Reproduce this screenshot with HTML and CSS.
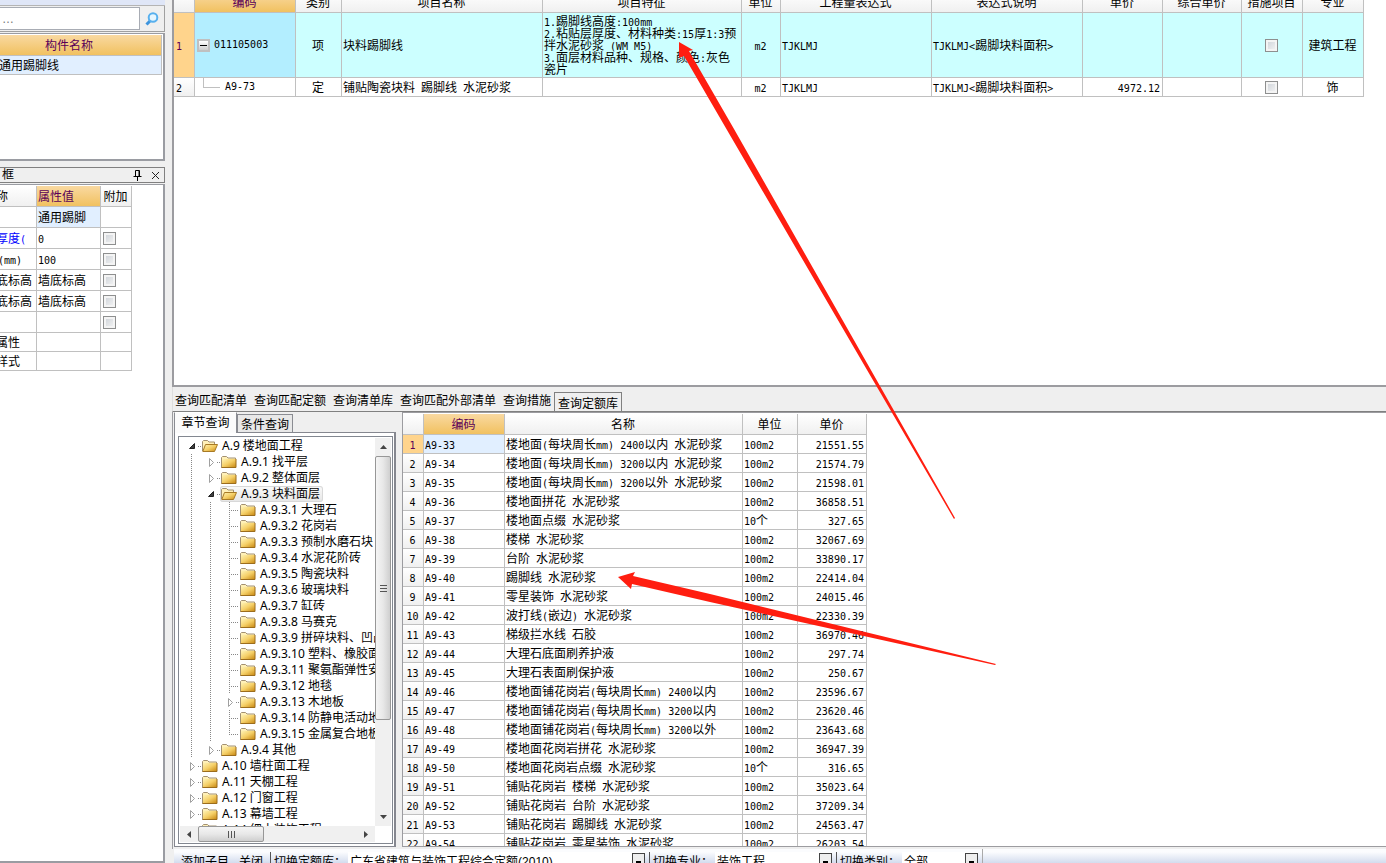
FILE: index.html
```html
<!DOCTYPE html>
<html lang="zh-CN">
<head>
<meta charset="utf-8">
<title>查询定额库</title>
<link rel="stylesheet" href="styles.css">
</head>
<body>
<svg class="defs" width="0" height="0" aria-hidden="true">
  <defs>
    <linearGradient id="gold" x1="0" y1="0" x2="1" y2="1"><stop offset="0" stop-color="#fff3b4"/><stop offset=".5" stop-color="#f5cf67"/><stop offset="1" stop-color="#c98a14"/></linearGradient>
    <symbol id="folder" viewBox="0 0 16 12"><path d="M.5 11.5V1.500L1.500 .5H5.500L7 2H14.500V11Z" fill="#fff0b8" stroke="#a39172"/><rect x="1" y="3" width="14" height="8" fill="url(#gold)"/><path d="M.5 11.500H15V3" fill="none" stroke="#9c6d1c"/></symbol>
    <symbol id="open" viewBox="0 0 16 12"><path d="M.5 11V1.500L1.500 .5H5.500L7 2H12.500V5" fill="#fff0b8" stroke="#a39172"/><path d="M3.500 4.500H15.500L12.500 11.500H.8Z" fill="url(#gold)" stroke="#a87a25"/></symbol>
    <symbol id="shut" viewBox="0 0 19 16"><path d="M8.500 4.500L12.500 8.500L8.500 12.500Z" fill="#fff" stroke="#a0a0a0"/><path d="M16 8.500H19" stroke="#888" stroke-dasharray="1 1"/></symbol>
    <symbol id="down" viewBox="0 0 19 16"><path d="M12.500 5.500V10.500H7.500Z" fill="#404040" stroke="#222"/><path d="M16 8.500H19" stroke="#888" stroke-dasharray="1 1"/></symbol>
  </defs>
</svg>
<div class="app">
  <aside class="side">
    <div class="strip"></div>
    <form class="search">
      <input type="text" aria-label="搜索构件" value="…">
      <button type="button" aria-label="搜索"><svg width="14" height="14" viewBox="0 0 14 14"><path d="M1.500 12.500L5 9" stroke="#3d94dd" stroke-width="3"/><circle cx="8" cy="5.500" r="4.300" fill="#e6f6ff" stroke="#58b0ee" stroke-width="2"/></svg></button>
    </form>
    <div class="panel names">
      <table><thead><tr><th class="hot">构件名称</th></tr></thead><tbody><tr><td class="pick">通用踢脚线</td></tr></tbody></table>
    </div>
    <div class="titlebar"><h2>框</h2>
      <button type="button" aria-label="固定"><svg width="9" height="11" viewBox="0 0 9 11"><path d="M2.500 6V.500H6.500V6M6 1V6M.500 6.500H8.500M4.500 7V11" fill="none" stroke="#000"/></svg></button>
      <button type="button" aria-label="关闭"><svg width="9" height="9" viewBox="0 0 9 9"><path d="M1 1L8 8M8 1L1 8" stroke="#222"/></svg></button>
    </div>
    <div class="panel props">
      <table>
        <colgroup><col class="p1"><col class="p2"><col class="p3"></colgroup>
        <thead><tr><th class="cut">称</th><th class="hot left">属性值</th><th>附加</th></tr></thead>
        <tbody>
          <tr><td></td><td class="pick">通用踢脚</td><td></td></tr>
          <tr><td class="cut blue">厚度<i>(</i></td><td><i>0</i></td><td><input type="checkbox" aria-label="附加 厚度"></td></tr>
          <tr><td class="cut unit"><i>(mm)</i></td><td><i>100</i></td><td><input type="checkbox" aria-label="附加 高度"></td></tr>
          <tr><td class="cut">底标高</td><td>墙底标高</td><td><input type="checkbox" aria-label="附加 起点底标高"></td></tr>
          <tr><td class="cut">底标高</td><td>墙底标高</td><td><input type="checkbox" aria-label="附加 终点底标高"></td></tr>
          <tr><td></td><td></td><td><input type="checkbox" aria-label="附加 备注"></td></tr>
          <tr class="low"><td class="cut">属性</td><td></td><td></td></tr>
          <tr class="low"><td class="cut">样式</td><td></td><td></td></tr>
        </tbody>
      </table>
    </div>
  </aside>

  <main class="main">
    <section class="upper">
      <table class="bill">
        <colgroup><col class="b1"><col class="b2"><col class="b3"><col class="b4"><col class="b5"><col class="b6"><col class="b7"><col class="b7"><col class="b8"><col class="b9"><col class="b10"><col class="b10"></colgroup>
        <thead><tr><th></th><th class="hot">编码</th><th>类别</th><th>项目名称</th><th>项目特征</th><th>单位</th><th>工程量表达式</th><th>表达式说明</th><th>单价</th><th>综合单价</th><th>措施项目</th><th>专业</th></tr></thead>
        <tbody>
          <tr class="current">
            <th class="now"><i>1</i></th>
            <td class="code"><div class="node"><button type="button" class="fold" aria-label="折叠"></button><i>011105003</i></div></td>
            <td class="mid">项</td><td>块料踢脚线</td>
            <td class="feature"><i>1.</i>踢脚线高度<i>:100mm</i><br><i>2.</i>粘贴层厚度、材料种类<i>:15</i>厚<i>1:3</i>预<br>拌水泥砂浆<i> (WM M5)</i><br><i>3.</i>面层材料品种、规格、颜色<i>:</i>灰色<br>瓷片</td>
            <td class="mid"><i>m2</i></td><td><i>TJKLMJ</i></td><td><i>TJKLMJ&lt;</i>踢脚块料面积<i>&gt;</i></td><td></td><td></td>
            <td class="mid"><input type="checkbox" aria-label="措施项目 1"></td><td class="mid">建筑工程</td>
          </tr>
          <tr class="child">
            <th><i>2</i></th><td><div class="node leaf"><span class="elbow"></span><i>A9-73</i></div></td>
            <td class="mid">定</td><td>铺贴陶瓷块料<i> </i>踢脚线<i> </i>水泥砂浆</td><td></td>
            <td class="mid"><i>m2</i></td><td><i>TJKLMJ</i></td><td><i>TJKLMJ&lt;</i>踢脚块料面积<i>&gt;</i></td><td class="num"><i>4972.12</i></td><td></td>
            <td class="mid"><input type="checkbox" aria-label="措施项目 2"></td><td class="mid">饰</td>
          </tr>
        </tbody>
      </table>
    </section>

    <nav class="tabs">
      <button type="button">查询匹配清单</button><button type="button">查询匹配定额</button><button type="button">查询清单库</button><button type="button">查询匹配外部清单</button><button type="button">查询措施</button><button type="button" class="on">查询定额库</button>
    </nav>

    <section class="lower">
      <div class="chapters">
        <div class="subtabs"><button type="button" class="on">章节查询</button><button type="button">条件查询</button></div>
        <div class="page">
          <div class="treebox">
            <ul class="tree">
              <li><svg class="c"><use href="#down"/></svg><svg class="f"><use href="#open"/></svg>A.9 楼地面工程</li>
              <li><b></b><svg class="c"><use href="#shut"/></svg><svg class="f"><use href="#folder"/></svg>A.9.1 找平层</li>
              <li><b></b><svg class="c"><use href="#shut"/></svg><svg class="f"><use href="#folder"/></svg>A.9.2 整体面层</li>
              <li><b></b><svg class="c"><use href="#down"/></svg><span class="sel"><svg class="f"><use href="#open"/></svg>A.9.3 块料面层</span></li>
              <li><b></b><b></b><b class="t"></b><svg class="f"><use href="#folder"/></svg>A.9.3.1 大理石</li>
              <li><b></b><b></b><b class="t"></b><svg class="f"><use href="#folder"/></svg>A.9.3.2 花岗岩</li>
              <li><b></b><b></b><b class="t"></b><svg class="f"><use href="#folder"/></svg>A.9.3.3 预制水磨石块</li>
              <li><b></b><b></b><b class="t"></b><svg class="f"><use href="#folder"/></svg>A.9.3.4 水泥花阶砖</li>
              <li><b></b><b></b><b class="t"></b><svg class="f"><use href="#folder"/></svg>A.9.3.5 陶瓷块料</li>
              <li><b></b><b></b><b class="t"></b><svg class="f"><use href="#folder"/></svg>A.9.3.6 玻璃块料</li>
              <li><b></b><b></b><b class="t"></b><svg class="f"><use href="#folder"/></svg>A.9.3.7 缸砖</li>
              <li><b></b><b></b><b class="t"></b><svg class="f"><use href="#folder"/></svg>A.9.3.8 马赛克</li>
              <li><b></b><b></b><b class="t"></b><svg class="f"><use href="#folder"/></svg>A.9.3.9 拼碎块料、凹凸</li>
              <li><b></b><b></b><b class="t"></b><svg class="f"><use href="#folder"/></svg>A.9.3.10 塑料、橡胶面</li>
              <li><b></b><b></b><b class="t"></b><svg class="f"><use href="#folder"/></svg>A.9.3.11 聚氨酯弹性安</li>
              <li><b></b><b></b><b class="t"></b><svg class="f"><use href="#folder"/></svg>A.9.3.12 地毯</li>
              <li><b></b><b></b><svg class="c"><use href="#shut"/></svg><svg class="f"><use href="#folder"/></svg>A.9.3.13 木地板</li>
              <li><b></b><b></b><b class="t"></b><svg class="f"><use href="#folder"/></svg>A.9.3.14 防静电活动地</li>
              <li><b></b><b></b><b class="t end"></b><svg class="f"><use href="#folder"/></svg>A.9.3.15 金属复合地板</li>
              <li><b></b><svg class="c"><use href="#shut"/></svg><svg class="f"><use href="#folder"/></svg>A.9.4 其他</li>
              <li><svg class="c"><use href="#shut"/></svg><svg class="f"><use href="#folder"/></svg>A.10 墙柱面工程</li>
              <li><svg class="c"><use href="#shut"/></svg><svg class="f"><use href="#folder"/></svg>A.11 天棚工程</li>
              <li><svg class="c"><use href="#shut"/></svg><svg class="f"><use href="#folder"/></svg>A.12 门窗工程</li>
              <li><svg class="c"><use href="#shut"/></svg><svg class="f"><use href="#folder"/></svg>A.13 幕墙工程</li>
              <li><svg class="c"><use href="#shut"/></svg><svg class="f"><use href="#folder"/></svg>A.14 细木装饰工程</li>
            </ul>
            <div class="vbar">
              <button type="button" aria-label="向上滚动"><svg width="7" height="4" viewBox="0 0 7 4"><path d="M0 4L3.500 0L7 4Z" fill="#444"/></svg></button>
              <div class="vthumb"><svg width="7" height="9" viewBox="0 0 7 9"><path d="M0 1.500H7M0 4.500H7M0 7.500H7" stroke="#555"/></svg></div>
              <button type="button" class="last" aria-label="向下滚动"><svg width="7" height="4" viewBox="0 0 7 4"><path d="M0 0L3.500 4L7 0Z" fill="#444"/></svg></button>
            </div>
            <div class="hbar">
              <button type="button" aria-label="向左滚动"><svg width="4" height="7" viewBox="0 0 4 7"><path d="M4 0L0 3.500L4 7Z" fill="#444"/></svg></button>
              <div class="hthumb"><svg width="9" height="7" viewBox="0 0 9 7"><path d="M1.500 0V7M4.500 0V7M7.500 0V7" stroke="#555"/></svg></div>
              <button type="button" class="last" aria-label="向右滚动"><svg width="4" height="7" viewBox="0 0 4 7"><path d="M0 0L4 3.500L0 7Z" fill="#444"/></svg></button>
            </div>
          </div>
        </div>
      </div>

      <div class="quota">
        <table>
          <colgroup><col class="q1"><col class="q2"><col class="q3"><col class="q4"><col class="q5"></colgroup>
          <thead><tr><th></th><th class="hot">编码</th><th>名称</th><th>单位</th><th>单价</th></tr></thead>
          <tbody>
            <tr><th class="now"><i>1</i></th><td class="pick"><i>A9-33</i></td><td>楼地面<i>(</i>每块周长<i>mm) 2400</i>以内<i> </i>水泥砂浆</td><td><i>100m2</i></td><td class="num"><i>21551.55</i></td></tr>
            <tr><th><i>2</i></th><td><i>A9-34</i></td><td>楼地面<i>(</i>每块周长<i>mm) 3200</i>以内<i> </i>水泥砂浆</td><td><i>100m2</i></td><td class="num"><i>21574.79</i></td></tr>
            <tr><th><i>3</i></th><td><i>A9-35</i></td><td>楼地面<i>(</i>每块周长<i>mm) 3200</i>以外<i> </i>水泥砂浆</td><td><i>100m2</i></td><td class="num"><i>21598.01</i></td></tr>
            <tr><th><i>4</i></th><td><i>A9-36</i></td><td>楼地面拼花<i> </i>水泥砂浆</td><td><i>100m2</i></td><td class="num"><i>36858.51</i></td></tr>
            <tr><th><i>5</i></th><td><i>A9-37</i></td><td>楼地面点缀<i> </i>水泥砂浆</td><td><i>10</i>个</td><td class="num"><i>327.65</i></td></tr>
            <tr><th><i>6</i></th><td><i>A9-38</i></td><td>楼梯<i> </i>水泥砂浆</td><td><i>100m2</i></td><td class="num"><i>32067.69</i></td></tr>
            <tr><th><i>7</i></th><td><i>A9-39</i></td><td>台阶<i> </i>水泥砂浆</td><td><i>100m2</i></td><td class="num"><i>33890.17</i></td></tr>
            <tr><th><i>8</i></th><td><i>A9-40</i></td><td>踢脚线<i> </i>水泥砂浆</td><td><i>100m2</i></td><td class="num"><i>22414.04</i></td></tr>
            <tr><th><i>9</i></th><td><i>A9-41</i></td><td>零星装饰<i> </i>水泥砂浆</td><td><i>100m2</i></td><td class="num"><i>24015.46</i></td></tr>
            <tr><th><i>10</i></th><td><i>A9-42</i></td><td>波打线<i>(</i>嵌边<i>) </i>水泥砂浆</td><td><i>100m2</i></td><td class="num"><i>22330.39</i></td></tr>
            <tr><th><i>11</i></th><td><i>A9-43</i></td><td>梯级拦水线<i> </i>石胶</td><td><i>100m2</i></td><td class="num"><i>36970.46</i></td></tr>
            <tr><th><i>12</i></th><td><i>A9-44</i></td><td>大理石底面刷养护液</td><td><i>100m2</i></td><td class="num"><i>297.74</i></td></tr>
            <tr><th><i>13</i></th><td><i>A9-45</i></td><td>大理石表面刷保护液</td><td><i>100m2</i></td><td class="num"><i>250.67</i></td></tr>
            <tr><th><i>14</i></th><td><i>A9-46</i></td><td>楼地面铺花岗岩<i>(</i>每块周长<i>mm) 2400</i>以内</td><td><i>100m2</i></td><td class="num"><i>23596.67</i></td></tr>
            <tr><th><i>15</i></th><td><i>A9-47</i></td><td>楼地面铺花岗岩<i>(</i>每块周长<i>mm) 3200</i>以内</td><td><i>100m2</i></td><td class="num"><i>23620.46</i></td></tr>
            <tr><th><i>16</i></th><td><i>A9-48</i></td><td>楼地面铺花岗岩<i>(</i>每块周长<i>mm) 3200</i>以外</td><td><i>100m2</i></td><td class="num"><i>23643.68</i></td></tr>
            <tr><th><i>17</i></th><td><i>A9-49</i></td><td>楼地面花岗岩拼花<i> </i>水泥砂浆</td><td><i>100m2</i></td><td class="num"><i>36947.39</i></td></tr>
            <tr><th><i>18</i></th><td><i>A9-50</i></td><td>楼地面花岗岩点缀<i> </i>水泥砂浆</td><td><i>10</i>个</td><td class="num"><i>316.65</i></td></tr>
            <tr><th><i>19</i></th><td><i>A9-51</i></td><td>铺贴花岗岩<i> </i>楼梯<i> </i>水泥砂浆</td><td><i>100m2</i></td><td class="num"><i>35023.64</i></td></tr>
            <tr><th><i>20</i></th><td><i>A9-52</i></td><td>铺贴花岗岩<i> </i>台阶<i> </i>水泥砂浆</td><td><i>100m2</i></td><td class="num"><i>37209.34</i></td></tr>
            <tr><th><i>21</i></th><td><i>A9-53</i></td><td>铺贴花岗岩<i> </i>踢脚线<i> </i>水泥砂浆</td><td><i>100m2</i></td><td class="num"><i>24563.47</i></td></tr>
            <tr><th><i>22</i></th><td><i>A9-54</i></td><td>铺贴花岗岩<i> </i>零星装饰<i> </i>水泥砂浆</td><td><i>100m2</i></td><td class="num"><i>26203.54</i></td></tr>
          </tbody>
        </table>
      </div>
    </section>

    <footer class="toolbar">
      <div class="tools">
        <button type="button">添加子目</button><button type="button">关闭</button>
        <label class="w1">切换定额库：<select><option>广东省建筑与装饰工程综合定额(2010)</option></select></label>
        <label class="w2">切换专业：<select><option>装饰工程</option></select></label>
        <label class="w3">切换类别：<select><option>全部</option></select></label>
      </div>
    </footer>
  </main>
</div>
<svg class="arrows" width="1386" height="863" viewBox="0 0 1386 863" aria-hidden="true">
  <path d="M679 42L693 50L689 51L734 129L955 518L954 519L727 130L684 56L679 58Z"/>
  <path d="M618 577L635 572L633 576L710 594L996 664L995 665L710 602L632 584L631 589Z"/>
</svg>
</body>
</html>
```
FILE: styles.css
```css
* { box-sizing: border-box; }
body { margin: 0; height: 100vh; overflow: hidden; background: #efefef; color: #000; font: 12px/14px "Liberation Sans", "Noto Sans CJK SC", sans-serif; }
button, input, select { font: inherit; color: inherit; margin: 0; padding: 0; border: 0; background: none; }
i { font: 10px/10px "DejaVu Sans Mono", monospace; white-space: pre; }
ul { list-style: none; margin: 0; padding: 0; }
.defs, .arrows { position: absolute; left: 0; top: 0; pointer-events: none; }
.arrows { fill: #ff1e10; }
.app { display: flex; height: 100%; }

/* tables */
table { border-collapse: separate; border-spacing: 0; table-layout: fixed; }
th, td { padding: 1px 2px 0 1px; border: solid #c0c0c0; border-width: 0 1px 1px 0; font-weight: normal; white-space: nowrap; overflow: hidden; text-align: left; }
th { padding: 1px 1px 0 0; text-align: center; background: linear-gradient(#fff, #f0f0f0); }
th.hot { color: #5a0058; background: linear-gradient(#f9d9a1, #f1c160); }
th.left { text-align: left; padding-left: 1px; }
th.now { background: #ffd48c; color: #5a0058; }
.pick { background: #e1efff; }
.mid { text-align: center; }
.num { text-align: right; }
input[type="checkbox"] { appearance: none; display: block; width: 13px; height: 13px; border: 1px solid #8e8f8f; background: linear-gradient(135deg, #cbd0d6, #f6f6f6); box-shadow: inset 0 0 0 2px #f4f4f4; }
.mid input[type="checkbox"] { margin: 0 auto; }

/* left column */
.side { flex: 0 0 165px; display: flex; flex-direction: column; overflow: hidden; }
.strip { height: 6px; background: #dfe6f7; border-bottom: 1px solid #b4b4b4; }
.search { display: flex; height: 26px; border: solid #a0a0a0; border-width: 0 1px 1px 0; }
.search input { flex: 1; min-width: 0; margin: 1px 0; padding-left: 2px; background: #fff; color: #777; border: 1px solid #a8acb4; border-left: 0; }
.search button { width: 24px; display: flex; align-items: center; justify-content: center; }
.panel { background: #fff; border: solid #9a9ca2; border-width: 1px 2px 2px 0; }
.names { height: 128px; margin-top: 1px; padding: 1px 1px 0 0; }
.names table { width: 100%; }
.names th { height: 21px; padding-right: 23px; }
.names td { height: 19px; padding-left: 0; text-indent: -1px; }
.titlebar { display: flex; align-items: center; gap: 9px; height: 16px; margin: 6px 0 1px; padding: 0 4px 0 2px; border: solid #808080; border-width: 1px 1px 1px 0; }
.titlebar h2 { flex: 1; margin: 0; font-size: 12px; font-weight: normal; }
.titlebar button { display: flex; }
.props { flex: 1; padding-top: 1px; }
.props table { width: 132px; }
.props th { height: 21px; }
.props td { height: 21px; }
.props .low td { height: 19px; }
.props input { margin-left: 1px; }
.p1 { width: 37px; }
.p2 { width: 64px; }
.p3 { width: 31px; }
.cut { padding-left: 0; text-align: left; text-indent: -4px; }
.cut.unit { text-indent: -2px; }
.blue { color: #00f; }

/* upper grid */
.main { flex: 1; min-width: 0; margin-left: 7px; display: flex; flex-direction: column; }
.upper { flex: 387 1 0; min-height: 0; overflow: hidden; background: #fff; border: solid #9c9ca0; border-width: 0 0 2px 2px; }
.bill { width: 1190px; margin-top: -7px; }
.bill thead th { height: 20px; }
.b1 { width: 21px; } .b2 { width: 101px; } .b3 { width: 46px; } .b4 { width: 201px; } .b5 { width: 199px; } .b6 { width: 39px; } .b7 { width: 151px; } .b8 { width: 80px; } .b9 { width: 79px; } .b10 { width: 61px; }
.bill tbody th { text-align: left; padding-left: 2px; }
.current td { height: 65px; background: #ccffff; }
.current .code { background: #b3eeff; }
.current .feature { line-height: 12px; }
.bill td:nth-child(2) { padding: 0 2px; }
.child td { height: 19px; }
.node { display: flex; align-items: center; height: 64px; gap: 4px; }
.leaf { height: 18px; gap: 5px; }
.fold { width: 13px; height: 13px; border: 2px solid #c0c0c0; background: linear-gradient(#000, #000) center / 7px 1px no-repeat, linear-gradient(#fff, #ccc); }
.elbow { width: 17px; height: 10px; margin: 0 0 9px 6px; border: solid #c0c0c0; border-width: 0 0 1px 1px; }

/* query tabs */
.tabs { flex: 0 0 25px; display: flex; align-items: center; gap: 7px; padding: 0 0 0 2px; border-bottom: 1px solid #808080; border-left: 1px solid #ddd; }
.tabs button { white-space: nowrap; height: 20px; padding-top: 3px; }
.tabs .on { align-self: flex-end; height: 19px; margin-left: -4px; padding: 3px 3px 0; border: 1px solid #808080; border-bottom: 0; }

/* lower area */
.lower { flex: 437 1 0; min-height: 0; display: flex; gap: 6px; padding-bottom: 2px; border-left: 1px solid #9c9ca0; }
.chapters { flex: 0 0 223px; display: flex; flex-direction: column; min-height: 0; padding-left: 1px; }
.subtabs { display: flex; align-items: flex-end; height: 20px; }
.subtabs button { height: 18px; padding: 2px 3px 0; border: 1px solid #8a8c92; border-bottom: 0; background: #e8e8e8; }
.subtabs .on { height: 21px; width: 63px; margin-bottom: -1px; padding: 0; background: #fbfbfb; border-top-color: #fff; position: relative; }
.page { flex: 1; min-height: 0; padding: 3px 1px 2px 3px; background: #fff; border: solid #85878f; border-width: 1px 2px 1px 1px; }
.treebox { height: 100%; display: grid; grid-template: minmax(0, 1fr) 16px / minmax(0, 1fr) 16px; padding: 1px; border: 1px solid #828790; }
.tree { overflow: hidden; padding-left: 2px; font-family: "Noto Sans", "Noto Sans CJK SC", sans-serif; }
.tree li { display: flex; align-items: center; height: 16px; line-height: 16px; white-space: nowrap; }
.c { flex: none; width: 19px; height: 16px; }
.f { flex: none; width: 16px; height: 12px; margin: 0 4px 0 1px; }
.tree b { flex: none; width: 19px; height: 16px; background: repeating-linear-gradient(#888 0 1px, transparent 1px 2px) 9px 0 / 1px 16px no-repeat; }
.tree .t { background: repeating-linear-gradient(#888 0 1px, transparent 1px 2px) 9px 0 / 1px 16px no-repeat, repeating-linear-gradient(90deg, #888 0 1px, transparent 1px 2px) 9px 8px / 10px 1px no-repeat; }
.tree .end { background-size: 1px 8px, 10px 1px; }
.sel { display: flex; align-items: center; height: 16px; padding-right: 3px; border-radius: 3px; background: linear-gradient(#fafafa, #e6e6e6); box-shadow: inset 0 0 0 1px #d8d8d8; }
.vbar, .hbar { display: flex; background: #f0f0f0; }
.vbar { flex-direction: column; }
.vbar button, .hbar button { flex: 0 0 18px; display: flex; align-items: center; justify-content: center; }
.vthumb, .hthumb { display: flex; align-items: center; justify-content: center; border: 1px solid #979797; border-radius: 2px; }
.vthumb { height: 68%; background: linear-gradient(90deg, #f5f5f5, #e8e8e8 50%, #cfcfcf); }
.hthumb { width: 66px; background: linear-gradient(#f5f5f5, #e8e8e8 50%, #cfcfcf); }
.last { margin: auto 0 0; }
.hbar .last { margin: 0 0 0 auto; }

.quota { flex: 1; min-width: 0; overflow: hidden; background: #fff; border: 1px solid #9c9ca0; border-right: 0; }
.quota table { width: 464px; margin-top: 1px; }
.quota thead th { height: 21px; }
.quota tbody td { height: 19px; }
.q1 { width: 21px; } .q2 { width: 81px; } .q3 { width: 238px; } .q4 { width: 55px; } .q5 { width: 69px; }

/* bottom toolbar */
.toolbar { flex: 0 0 14px; overflow: hidden; background: linear-gradient(#fbfcfe 0 3px, #d3dcee); border-left: 2px solid #efefef; }
.tools { display: flex; align-items: center; width: max-content; height: 26px; padding-left: 7px; border-right: 1px solid #aaa; }
.tools button { margin-right: 10px; }
.tools label { display: flex; align-items: center; padding-left: 3px; margin-right: 4px; border-left: 1px solid #555; white-space: nowrap; }
.tools label:first-of-type { margin-left: -3px; }
.tools select { appearance: none; height: 20px; margin-left: 2px; padding: 0 16px 0 2px; border-radius: 0; background: linear-gradient(#000, #000) right 4px center / 5px 2px no-repeat, linear-gradient(#444, #444) right 0 center / 1px 18px no-repeat, linear-gradient(#444, #444) right 12px center / 1px 18px no-repeat, linear-gradient(#444, #444) right 0 top 1px / 13px 1px no-repeat, linear-gradient(#eee, #eee) right 0 center / 13px 18px no-repeat, #fff; }
.w1 select { width: 297px; }
.w2 select { width: 117px; }
.w3 select { width: 76px; }
```
